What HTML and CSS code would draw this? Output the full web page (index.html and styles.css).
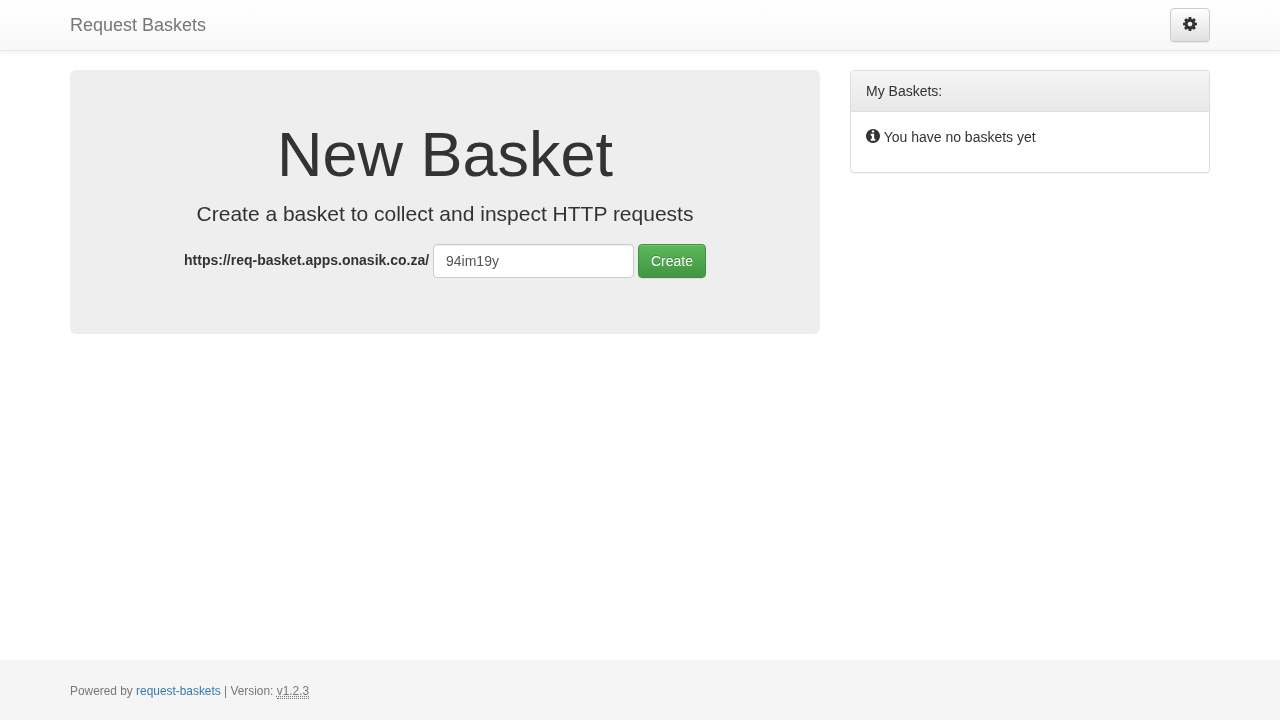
FILE: index.html
```html
<!DOCTYPE html>
<html lang="en">
<head>
<meta charset="utf-8">
<title>Request Baskets</title>
<link rel="stylesheet" href="styles.css">
</head>
<body>
<nav class="navbar">
  <div class="container navbar-inner">
    <a class="brand" href="#">Request Baskets</a>
    <button class="btn btn-default" type="button" aria-label="Settings">
      <svg class="icon" viewBox="128 128 1536 1536" width="14" height="14"><path d="M1152 896q0-106-75-181t-181-75-181 75-75 181 75 181 181 75 181-75 75-181zm512-109v222q0 12-8 23t-20 13l-185 28q-19 54-39 91 35 50 107 138 10 12 10 25t-9 23q-27 37-99 108t-94 71q-12 0-26-9l-138-108q-44 23-91 38-16 136-29 186-7 28-36 28h-222q-14 0-24.5-8.5t-11.5-21.5l-28-184q-49-16-90-37l-141 107q-10 9-25 9-14 0-25-11-126-114-165-168-7-10-7-23 0-12 8-23 15-21 51-66.5t54-70.5q-27-50-41-99l-183-27q-13-2-21-12.5t-8-23.5v-222q0-12 8-23t19-13l186-28q14-46 39-92-40-57-107-138-10-12-10-24 0-10 9-23 26-36 98.5-107.5t94.5-71.5q13 0 26 10l138 107q44-23 91-38 16-136 29-186 7-28 36-28h222q14 0 24.5 8.5t11.5 21.5l28 184q49 16 90 37l142-107q9-9 24-9 13 0 25 10 129 119 165 170 7 8 7 22 0 12-8 23-15 21-51 66.5t-54 70.5q26 50 41 98l183 28q13 2 21 12.5t8 23.5z"/></svg>
    </button>
  </div>
</nav>
<main class="container content">
  <section class="jumbotron">
    <h1>New Basket</h1>
    <p class="lead">Create a basket to collect and inspect HTTP requests</p>
    <form class="basket-form">
      <label class="basket-label" for="basket">https://req-basket.apps.onasik.co.za/</label>
      <input class="basket-input" id="basket" type="text" value="94im19y">
      <button class="btn btn-success" type="button">Create</button>
    </form>
  </section>
  <aside class="panel">
    <div class="panel-heading">My Baskets:</div>
    <div class="panel-body">
      <p class="empty"><svg class="icon info" viewBox="128 128 1536 1536" width="14" height="14"><path d="M1152 1376v-160q0-14-9-23t-23-9h-96v-512q0-14-9-23t-23-9h-320q-14 0-23 9t-9 23v160q0 14 9 23t23 9h96v320h-96q-14 0-23 9t-9 23v160q0 14 9 23t23 9h448q14 0 23-9t9-23zm-128-896v-160q0-14-9-23t-23-9h-192q-14 0-23 9t-9 23v160q0 14 9 23t23 9h192q14 0 23-9t9-23zm640 416q0 209-103 385.5t-279.5 279.5-385.5 103-385.5-103-279.5-279.5-103-385.5 103-385.5 279.5-279.5 385.5-103 385.5 103 279.5 279.5 103 385.5z"/></svg> You have no baskets yet</p>
    </div>
  </aside>
</main>
<footer class="footer">
  <div class="container footer-text">Powered by <a href="#">request-baskets</a> | Version: <abbr title="Version">v1.2.3</abbr></div>
</footer>
</body>
</html>
```
FILE: styles.css
```css
* { box-sizing: border-box; }
html, body { height: 100%; }
body {
  margin: 0;
  display: flex;
  flex-direction: column;
  min-height: 720px;
  font-family: "Liberation Sans", Arial, sans-serif;
  font-size: 14px;
  line-height: 20px;
  color: #333;
  background: #fff;
}
.container { width: 1140px; margin: 0 auto; will-change: transform; }
.navbar {
  height: 51px;
  flex: none;
  background: linear-gradient(to bottom, #fff 0%, #f8f8f8 100%);
  border-bottom: 1px solid #e7e7e7;
  box-shadow: inset 0 1px 0 rgba(255,255,255,.15), 0 1px 5px rgba(0,0,0,.075);
}
.navbar-inner {
  display: flex;
  justify-content: space-between;
  align-items: flex-start;
  padding-top: 8px;
}
.brand {
  font-size: 18px;
  line-height: 20px;
  padding-top: 7px;
  color: #777;
  text-decoration: none;
}
.btn {
  display: inline-block;
  height: 34px;
  padding: 6px 12px;
  font: inherit;
  line-height: 20px;
  border-radius: 4px;
  border: 1px solid transparent;
  vertical-align: middle;
  text-shadow: 0 1px 0 #fff;
  box-shadow: inset 0 1px 0 rgba(255,255,255,.15), 0 1px 1px rgba(0,0,0,.075);
}
.btn-default {
  width: 40px;
  color: #333;
  background: linear-gradient(to bottom, #fff 0%, #e0e0e0 100%);
  border-color: #ccc;
}
.btn-success {
  color: #fff;
  background: linear-gradient(to bottom, #5cb85c 0%, #419641 100%);
  border-color: #3e8f3e;
  text-shadow: 0 -1px 0 rgba(0,0,0,.2);
}
.icon { display: inline-block; fill: currentColor; vertical-align: -1px; }
.content {
  flex: 1;
  display: flex;
  align-items: flex-start;
  gap: 30px;
  padding-top: 19px;
}
.jumbotron {
  width: 750px;
  flex: none;
  padding: 50px 60px 48px;
  background: #eee;
  border-radius: 6px;
  text-align: center;
}
h1 {
  margin: 0 0 10px;
  font-size: 63px;
  font-weight: 500;
  line-height: 69.3px;
  color: #333;
}
.lead {
  margin: 0 0 15px;
  font-size: 21px;
  line-height: 30px;
}
.basket-form { margin: 0 0 7.7px; }
.basket-label { font-weight: 700; display: inline-block; vertical-align: middle; margin-bottom: 2px; }
.basket-input {
  display: inline-block;
  width: 201px;
  height: 34px;
  padding: 6px 12px;
  font: inherit;
  line-height: 20px;
  color: #555;
  background: #fff;
  border: 1px solid #ccc;
  border-radius: 4px;
  vertical-align: middle;
  box-shadow: inset 0 1px 1px rgba(0,0,0,.075);
}
.panel {
  flex: 1;
  background: #fff;
  border: 1px solid #ddd;
  border-radius: 4px;
  box-shadow: 0 1px 1px rgba(0,0,0,.05);
}
.panel-heading {
  height: 41px;
  padding: 10px 15px;
  color: #333;
  background: linear-gradient(to bottom, #f5f5f5 0%, #e8e8e8 100%);
  border-bottom: 1px solid #ddd;
  border-radius: 3px 3px 0 0;
}
.panel-body { padding: 15px; }
.empty { margin: 0 0 10px; }
.footer {
  height: 60px;
  flex: none;
  background: #f5f5f5;
}
.footer-text {
  padding-top: 21px;
  font-size: 11.9px;
  line-height: 20px;
  color: #777;
}
.footer-text a { color: #337ab7; text-decoration: none; }
.footer-text abbr { text-decoration: underline dotted; border-bottom: 1px dotted #777; cursor: help; }
```
